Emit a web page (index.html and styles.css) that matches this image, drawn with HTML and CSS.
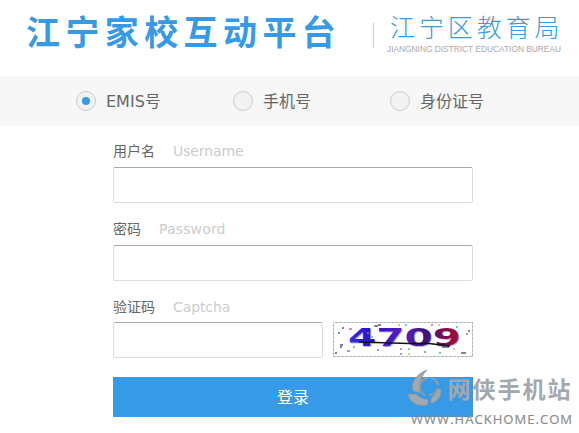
FILE: index.html
```
<!DOCTYPE html>
<html lang="zh-CN">
<head>
<meta charset="utf-8">
<title>江宁家校互动平台</title>
<link rel="stylesheet" href="styles.css">
</head>
<body>
<header class="header">
  <h1 class="title">江宁家校互动平台</h1>
  <div class="bureau">
    <div class="bureau-cn">江宁区教育局</div>
    <svg class="bureau-en" width="176" height="12"><text x="0" y="9" textLength="174" lengthAdjust="spacingAndGlyphs">JIANGNING DISTRICT EDUCATION BUREAU</text></svg>
  </div>
</header>
<nav class="tabs">
  <label class="tab"><span class="radio on"></span><span class="emis-label"><span class="emis">EMIS</span>号</span></label>
  <label class="tab"><span class="radio"></span><span>手机号</span></label>
  <label class="tab"><span class="radio"></span><span>身份证号</span></label>
</nav>
<main class="form">
  <div class="label">用户名<span class="hint">Username</span></div>
  <div class="input"></div>
  <div class="label">密码<span class="hint pw">Password</span></div>
  <div class="input"></div>
  <div class="label last">验证码<span class="hint">Captcha</span></div>
  <div class="row">
    <div class="input short"></div>
    <svg class="captcha" width="140" height="36" viewBox="0 0 140 36">
      <defs><linearGradient id="ink" gradientUnits="userSpaceOnUse" x1="15" y1="0" x2="128" y2="0"><stop offset="0" stop-color="#3432d8"/><stop offset=".2" stop-color="#2a10cf"/><stop offset=".5" stop-color="#5a20b8"/><stop offset=".68" stop-color="#401080"/><stop offset="1" stop-color="#b00c28"/></linearGradient></defs>
      <rect x=".5" y=".5" width="139" height="34" fill="#fff" stroke="#aaa"/>
      <rect x=".5" y=".5" width="139" height="34" fill="none" stroke="#ddd" stroke-dasharray="2 2"/>
      <text class="digits shade" x="16" y="25" textLength="113" lengthAdjust="spacingAndGlyphs">4709</text>
      <text class="digits" x="15" y="24" textLength="113" lengthAdjust="spacingAndGlyphs">4709</text>
      <path d="M26 20L76 21.5H96L117 24" fill="none" stroke="#111" stroke-width="1.3"/>
      <g fill="none" stroke-width="1.5" opacity=".8">
        <path stroke="#335" d="M41 4h4M45 3h3M5 11h2M7 23h3M7 25h2M2 31h2M128 31h5M109 25h7M135 9h2M9 6h2"/>
        <path stroke="#b4a" d="M16 7h3M98 3h2M133 12h2M67 27h2M52 24h3"/>
        <path stroke="#3a8" d="M72 3h2M123 5h2M20 25h2M75 27h2M106 31h2M38 15h2"/>
        <path stroke="#d93" d="M65 3h2M105 3h2M75 32h2M120 27h2M34 11h2"/>
        <path stroke="#55d" d="M14 29h3M67 32h2M44 28h2M91 30h2"/>
      </g>
    </svg>
  </div>
  <button class="submit">登录</button>
</main>
<svg class="watermark" width="169" height="66" viewBox="0 0 169 66">
  <g fill="#a0a8b0" stroke="#80909d" stroke-width=".7">
    <path d="M20 3C9 7 3 17 6 24L13 26C12 17 14 9 20 3Z"/>
    <path d="M1 27C3 36 11 40 21 38V32C15 33 12 29 9 27Z"/>
    <path d="M24 31V37C31 34 35 29 34 22H30C29 26 27 29 24 31Z"/>
  </g>
  <path d="M21 11A9 9 0 0 0 18 28M24 11A9 9 0 0 1 31 18M31 21A9 9 0 0 1 22 28" fill="none" stroke="#909ca6" stroke-width="1.8"/>
  <text class="mark-cn" x="40.600" y="31" textLength="123" lengthAdjust="spacing">网侠手机站</text>
  <text class="mark-url" x="4" y="57" textLength="161" lengthAdjust="spacing">WWW.HACKHOME.COM</text>
</svg>
</body>
</html>
```
FILE: styles.css
```
* { box-sizing: border-box; }
body {
  margin: 0;
  width: 579px;
  height: 433px;
  overflow: hidden;
  position: relative;
  background: #fff;
  color: #666;
  font-family: "DejaVu Sans", "Noto Sans CJK SC", sans-serif;
}
.header { display: flex; height: 76px; padding-left: 26px; }
.title {
  margin: 0;
  width: 347px;
  padding-top: 6px;
  font: 700 34px/50px "Noto Sans CJK SC", sans-serif;
  letter-spacing: 5.4px;
  color: #369ae6;
  white-space: nowrap;
}
.bureau { position: relative; padding: 11px 0 0 14px; }
.bureau::before {
  content: "";
  position: absolute;
  left: 0;
  top: 23px;
  width: 1px;
  height: 25px;
  background: #ccc;
}
.bureau-cn {
  padding-left: 3px;
  font: 300 25px/30px "Noto Sans CJK SC", sans-serif;
  letter-spacing: 3.9px;
  color: #369ae6;
  white-space: nowrap;
}
.bureau-en { display: block; margin-top: 2px; font: 8.5px "Liberation Sans", sans-serif; fill: #aaa; }
.tabs { display: flex; height: 50px; padding-left: 76px; background: #f7f7f7; }
.tab {
  display: flex;
  align-items: center;
  gap: 10px;
  width: 157px;
  flex: none;
  font: 16px/24px "Noto Sans CJK SC", sans-serif;
}
.tab > span:last-child { margin-top: -2px; }
.tab > span.emis-label { margin-top: 0; }
.tab:last-child { width: 103px; }
.emis { font-family: "DejaVu Sans", sans-serif; }
.radio {
  display: flex;
  align-items: center;
  justify-content: center;
  width: 20px;
  height: 20px;
  border: 1px solid #ccc;
  border-radius: 50%;
  background: #f2f2f2;
}
.radio.on::after { content: ""; width: 8px; height: 8px; border-radius: 50%; background: #369ae6; }
.form { width: 360px; margin: 14px 0 0 113px; }
.label {
  display: flex;
  align-items: center;
  height: 20px;
  margin-bottom: 7px;
  font: 14px/20px "Noto Sans CJK SC", sans-serif;
}
.label.last { margin-bottom: 6px; }
.hint { margin: 2px 0 0 18px; color: #ccc; font-family: "DejaVu Sans", sans-serif; letter-spacing: -.1px; }
.hint.pw { letter-spacing: .15px; }
.input {
  height: 36px;
  margin-bottom: 15px;
  border: 1px solid #ddd;
  border-top-color: #aaa;
  border-radius: 2px;
}
.row { display: flex; justify-content: space-between; height: 55px; }
.short { width: 210px; }
.digits { font: 700 25px "DejaVu Sans", sans-serif; fill: url(#ink); }
.shade { fill: #9090d8; opacity: .6; }
.submit {
  display: block;
  width: 360px;
  height: 40px;
  padding: 0 0 2px;
  border: 0;
  background: #369ae6;
  color: #fff;
  font: 16px/38px "Noto Sans CJK SC", sans-serif;
}
.watermark { position: absolute; left: 407px; top: 367px; }
.mark-cn { font: 700 23px "Noto Sans CJK SC", sans-serif; fill: #a3a8ac; }
.mark-url { font: 13px "Open Sans", sans-serif; fill: #8d8d8d; stroke: #8d8d8d; stroke-width: .2px; }
```
